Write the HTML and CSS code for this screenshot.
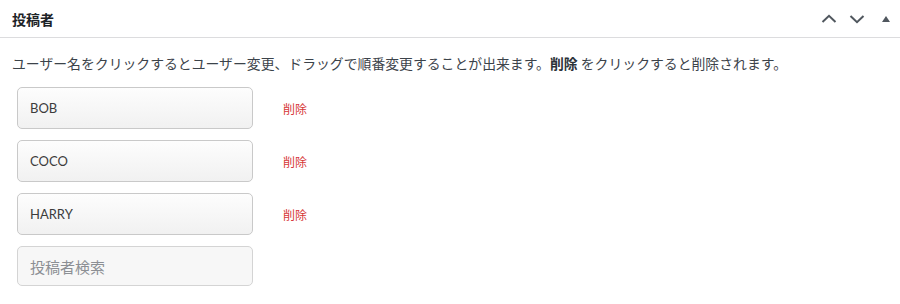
FILE: index.html
```html
<!DOCTYPE html>
<html lang="ja">
<head>
  <meta charset="UTF-8" />
  <title>投稿者</title>
  <link rel="stylesheet" href="styles.css">
</head>
<body>
  <div class="postbox">
    <div class="postbox-header">
      <h2>投稿者</h2>
      <div class="handle-actions">
        <button class="handle-btn" aria-label="上へ移動">
          <svg width="16" height="16" viewBox="0 0 16 16"><path d="M1.5 11 L8 4.8 L14.5 11" fill="none" stroke="#50575e" stroke-width="2"/></svg>
        </button>
        <button class="handle-btn" aria-label="下へ移動">
          <svg width="16" height="16" viewBox="0 0 16 16"><path d="M1.5 5 L8 11.2 L14.5 5" fill="none" stroke="#50575e" stroke-width="2"/></svg>
        </button>
        <button class="handle-btn small" aria-label="パネルを切り替え">
          <svg width="10" height="10" viewBox="0 0 10 10"><path d="M1 8 L5 2 L9 8 Z" fill="#50575e"/></svg>
        </button>
      </div>
    </div>

    <div class="inside">
      <p class="desc">ユーザー名をクリックするとユーザー変更、ドラッグで順番変更することが出来ます。<strong>削除</strong> をクリックすると削除されます。</p>

      <ul class="author-list">
        <li>
          <span class="author-box">BOB</span>
          <a href="#" class="delete">削除</a>
        </li>
        <li>
          <span class="author-box">COCO</span>
          <a href="#" class="delete">削除</a>
        </li>
        <li>
          <span class="author-box">HARRY</span>
          <a href="#" class="delete">削除</a>
        </li>
        <li>
          <input type="text" class="author-box search" placeholder="投稿者検索" />
        </li>
      </ul>
    </div>
  </div>
</body>
</html>
```

FILE: styles.css
```css
body {
  margin: 0;
  font-family: "Segoe UI", "Lato", "Noto Sans CJK JP", sans-serif;
  background: #fff;
  color: #3c434a;
}

.postbox-header {
  height: 37px;
  display: flex;
  align-items: center;
  justify-content: space-between;
  border-bottom: 1px solid #dcdcde;
  padding: 0 8px 0 12px;
}

.postbox-header h2 {
  margin: 0;
  font-size: 14px;
  font-weight: 700;
  color: #1d2327;
  font-family: "Noto Sans CJK JP", sans-serif;
}

.handle-actions {
  display: flex;
  align-items: center;
  gap: 12px;
}

.handle-btn {
  background: none;
  border: none;
  padding: 0;
  width: 16px;
  height: 16px;
  display: flex;
  align-items: center;
  justify-content: center;
  cursor: pointer;
}

.handle-btn.small {
  width: 12px;
  margin-left: 3px;
}

.inside {
  padding: 0 12px;
}

.desc {
  margin: 15px 0 14px;
  font-size: 13.85px;
  line-height: 20px;
  font-family: "Noto Sans CJK JP", sans-serif;
}

.desc strong {
  color: #2c3338;
}

.author-list {
  list-style: none;
  margin: 0;
  padding: 0 0 0 5px;
  display: flex;
  flex-direction: column;
  gap: 11px;
}

.author-list li {
  display: flex;
  align-items: center;
  gap: 30px;
}

.author-box {
  box-sizing: border-box;
  width: 236px;
  height: 42px;
  padding: 0 12px;
  display: flex;
  align-items: center;
  border: 1px solid #c9c9c9;
  border-radius: 5px;
  background: linear-gradient(#fdfdfd, #f1f1f1);
  font-family: "Lato", "Noto Sans CJK JP", sans-serif;
  font-size: 13px;
  color: #3c3c3c;
}

.author-box.search {
  height: 40px;
  background: #f7f7f7;
  border-color: #d4d4d4;
  font-size: 15px;
  font-family: "Noto Sans CJK JP", sans-serif;
  outline: none;
}

.author-box.search::placeholder {
  color: #8c8f94;
}

.delete {
  color: #d63638;
  text-decoration: none;
  font-size: 12px;
  font-family: "Noto Sans CJK JP", sans-serif;
}
```
